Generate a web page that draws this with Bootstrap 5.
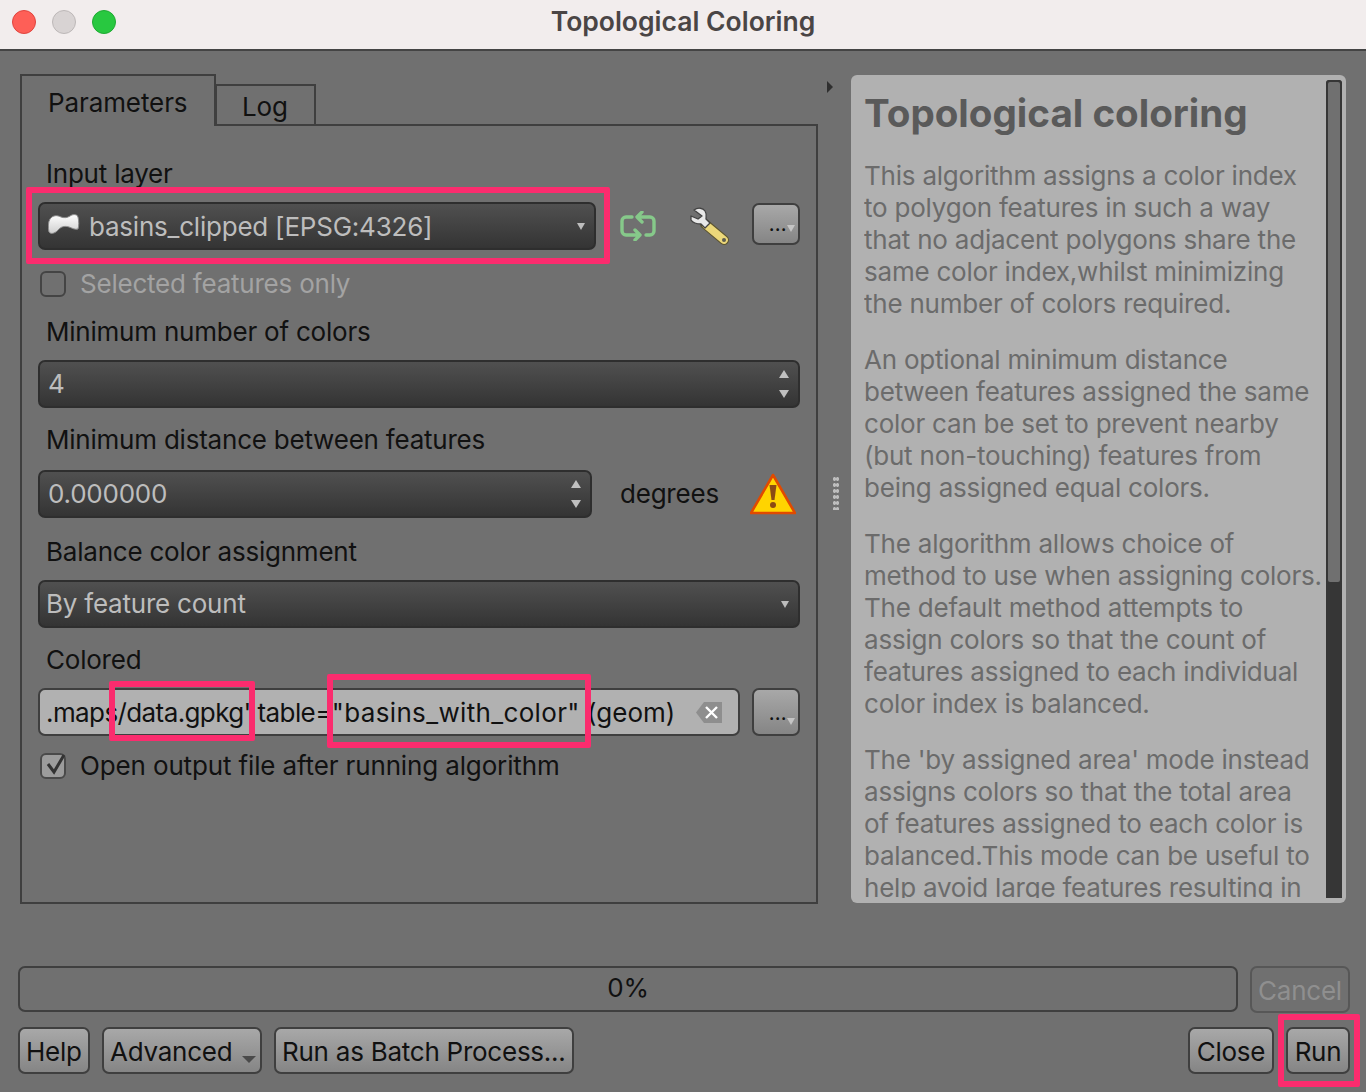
<!DOCTYPE html>
<html lang="en">
<head>
<meta charset="utf-8">
<title>Topological Coloring</title>
<link href="https://cdn.jsdelivr.net/npm/bootstrap@5.3.0/dist/css/bootstrap.min.css" rel="stylesheet">
<style>
html,body{margin:0;height:1092px;overflow:hidden;background:#707070}
body{font-family:Inter,"Noto Sans",sans-serif;font-size:26px;color:#111;line-height:32px;letter-spacing:-.22px}
.app-win{position:relative;width:1366px;height:1092px;background:#707070}
.title-bar{height:51px;background:#f2eded;border-bottom:2px solid #444;position:relative;justify-content:center;align-items:center;padding-bottom:8px}
.title-text{font-weight:600;color:#4a4545;font-size:26.5px;letter-spacing:0}
.lights{position:absolute;left:12px;top:10px;gap:16px}
.light{width:24px;height:24px;border-radius:50%}
.l-red{background:#fe5f57;border:1px solid #e0443e}
.l-grey{background:#d8d3d3;border:1px solid #bdb8b8}
.l-green{background:#28c840;border:1px solid #1eaa32}
.main-row{padding:23px 0 0 20px;height:890px}
.left-col{width:798px;flex:none}
.tabbar{height:52px;align-items:flex-end;border:0;margin-bottom:-2px;position:relative;z-index:1}
.tab-on,.tab-off{border:2px solid #3f3f3f;color:#111;font-size:26px;letter-spacing:-.1px}
.tab-on{width:196px;height:52px;border-bottom:0;background:#707070;padding:11px 0 0 26px}
.tab-off{width:101px;height:42px;margin-left:-1px;padding:5px 0 0 25px}
.pane{height:780px;border:2px solid #3f3f3f;padding:31px 16px 0 16px}
.lbl{height:32px;padding:1px 0 0 8px}
.ctl{height:48px;border:2px solid #2e2e2e;border-radius:7px;background:linear-gradient(#505050,#343434);color:#bdbdbd;align-items:center;position:relative;padding-left:8px}
.m13{margin-top:13px}.m15{margin-top:15px}.m17{margin-top:17px}.m18{margin-top:18px}.m21{margin-top:21px}
.w-combo{width:558px}.w-full{width:762px}.w-spin{width:554px}
.caret-d{position:absolute;right:9px;top:50%;margin-top:-3px;width:0;height:0;border:4px solid transparent;border-top:7px solid #bdbdbd;border-bottom:0}
.spin-u,.spin-d{position:absolute;right:9px;width:0;height:0;border-left:5px solid transparent;border-right:5px solid transparent}
.spin-u{top:8px;border-bottom:8px solid #c0c0c0}
.spin-d{bottom:8px;border-top:8px solid #c0c0c0}
.chk-row{height:26px;align-items:center;padding-left:2px;gap:14px}
.chk-box{width:26px;height:26px;border:2px solid #444;border-radius:6px;flex:none}
.chk-box.on{background:#9c9c9c;border-color:#4a4a4a}
.chk-box svg{overflow:visible}
.txt-dis{color:#a3a3a3}
.txt-open{letter-spacing:-.14px}
.combo-txt{margin-top:2px;margin-left:1px}
.feat-txt{margin-left:-2px}
.mini-btn{width:48px;height:48px;border:2px solid #3f3f3f;border-radius:7px;background:linear-gradient(#a8a8a8,#858585);position:relative;flex:none}
.mini-btn b{position:absolute;left:15px;top:16px;font-size:16px;line-height:16px;font-weight:700;color:#111;letter-spacing:.6px}
.mini-btn i{position:absolute;right:3px;top:28px;width:0;height:0;border-left:4px solid transparent;border-right:4px solid transparent;border-top:7px solid #c4c4c4}
.mini-top{height:42px;align-self:flex-start;margin-top:1px;margin-left:22px}
.mini-top b{top:12px}
.mini-top i{top:20px}
.edit-box{width:702px;height:48px;background:#b1b1b1;border:2px solid #3f3f3f;border-radius:7px;position:relative;overflow:hidden;white-space:nowrap;padding:7px 0 0 6px;line-height:32px;margin-right:12px;letter-spacing:0}
.seg-a{letter-spacing:-.6px}
.seg-b{letter-spacing:.35px}
.clear-ic{position:absolute;right:16px;top:12px}
.help-panel{width:495px;height:828px;margin-left:33px;margin-top:1px;background:#b1b1b1;border-radius:6px;position:relative;padding:0 0 0 13px;overflow:hidden;color:#6b6b6b}
.help-clip{height:823px;overflow:hidden;width:470px;white-space:nowrap}
.help-h{font-size:38.6px;font-weight:700;color:#5a5a5a;margin:0;line-height:44px;padding-top:16px;height:85px;letter-spacing:0}
.help-p{margin:0 0 24px 0;line-height:32px}
.sb-track{position:absolute;right:4px;top:5px;width:16px;height:818px;background:#363636;border-radius:3px 3px 0 0}
.sb-thumb{height:504px;background:#707070;border:2px solid #363636;border-radius:4px}
.split-arrow{position:absolute;left:827px;top:81px;width:0;height:0;border-top:6px solid transparent;border-bottom:6px solid transparent;border-left:6px solid #2f2f2f}
.split-dots{position:absolute;left:833px;top:476px;width:6px;height:34px;background-image:radial-gradient(circle,#bdbdbd 1.6px,transparent 2px);background-size:3px 6px}
.bar-row{padding:0 16px 0 18px;height:47px;margin-top:25px;justify-content:space-between}
.prog-box{width:1220px;height:46px;border:2px solid #3f3f3f;border-radius:7px;text-align:center;line-height:40px}
.qbtn{height:47px;padding:2px 6px 0;border:2px solid #3f3f3f;border-radius:7px;background:linear-gradient(#a8a8a8,#858585);font-size:26px;color:#111;line-height:41px;--bs-btn-hover-bg:#999;white-space:nowrap;letter-spacing:-.25px}
.qbtn.dis{background:#707070;color:#a0a0a0;width:100px;border-color:#4a4a4a;padding:2px 0 0}
.btn-row{padding:0 16px 0 18px;margin-top:14px;height:47px;justify-content:space-between}
.btn-grp{gap:12px}
.w-help{width:72px;text-align:left}.w-adv{width:160px;text-align:left;position:relative}.w-batch{width:300px;text-align:left}.w-close{width:86px}.w-run{width:64px}
.adv-caret{position:absolute;right:4px;bottom:9px;width:0;height:0;border-left:7px solid transparent;border-right:7px solid transparent;border-top:7px solid #4a4a4a}
.pink{position:absolute;border:6px solid #fb2c6e;border-radius:2px;pointer-events:none;z-index:5}
.p-input{left:26px;top:187px;width:584px;height:77px}
.p-gpkg{left:109px;top:681px;width:146px;height:60px}
.p-basins{left:327px;top:674px;width:264px;height:74px}
.p-run{left:1278px;top:1014px;width:82px;height:73px}
.deg-lbl{margin-left:28px;width:130px;flex:none}
.ic-wrench{margin-left:32px}
</style>
</head>
<body>
<div class="app-win">
  <div class="title-bar d-flex">
    <div class="lights d-flex"><span class="light l-red"></span><span class="light l-grey"></span><span class="light l-green"></span></div>
    <div class="title-text">Topological Coloring</div>
  </div>

  <div class="main-row d-flex">
    <div class="left-col">
      <div class="tabbar d-flex">
        <div class="tab-on">Parameters</div>
        <div class="tab-off">Log</div>
      </div>
      <div class="pane">
        <div class="lbl">Input layer</div>
        <div class="d-flex align-items-center m13">
          <div class="ctl d-flex w-combo">
            <svg width="32" height="24" viewBox="0 0 32 24" class="me-2 flex-shrink-0"><defs><linearGradient id="lg" x1="0" y1="0" x2="0" y2="1"><stop offset="0" stop-color="#fff"/><stop offset="1" stop-color="#cfcfcf"/></linearGradient></defs><path d="M2 5C5 1 9 1 13 3c3 1 6 1 9-1 3-2 7-2 8 1 1 4 1 9 0 12-3 1-6-1-9-2-3-1-7-1-10 2-3 4-8 6-10 3C0 14 0 8 2 5z" fill="url(#lg)" stroke="#8a8a8a" stroke-width="1"/></svg>
            <span class="combo-txt">basins_clipped [EPSG:4326]</span>
            <span class="caret-d"></span>
          </div>
          <svg class="ms-4 flex-shrink-0" width="36" height="30" viewBox="0 0 36 30"><path d="M12 6H6a4 4 0 0 0-4 4v10a4 4 0 0 0 4 4h14M15 19l5 5-5 5M26 24h4a4 4 0 0 0 4-4V10a4 4 0 0 0-4-4H17M22 1l-5 5 5 5" fill="none" stroke="#86c98a" stroke-width="3.4" stroke-linecap="round" stroke-linejoin="round"/></svg>
          <svg class="ic-wrench flex-shrink-0" width="42" height="38" viewBox="0 0 42 38"><path d="M17 17L36 33" stroke="#5d5530" stroke-width="10" stroke-linecap="round"/><path d="M18 18L36 33" stroke="#ecd87a" stroke-width="7.6" stroke-linecap="round"/><circle cx="36" cy="33" r="2" fill="#5d5d50"/><path d="M6 3c4-3 9-2 11 1 2 3 1 6 1 8l4 4-5 5-4-4c-4 0-8-1-10-4L3 9l7 3 4-3z" fill="#e8e8e8" stroke="#444" stroke-width="1.3" stroke-linejoin="round"/></svg>
          <div class="mini-btn mini-top"><b>...</b><i></i></div>
        </div>
        <div class="chk-row d-flex m21"><span class="chk-box"></span><span class="txt-dis">Selected features only</span></div>
        <div class="lbl m18">Minimum number of colors</div>
        <div class="ctl d-flex w-full m13"><span>4</span><span class="spin-u"></span><span class="spin-d"></span></div>
        <div class="lbl m15">Minimum distance between features</div>
        <div class="d-flex align-items-center m15">
          <div class="ctl d-flex w-spin"><span>0.000000</span><span class="spin-u"></span><span class="spin-d"></span></div>
          <span class="deg-lbl">degrees</span>
          <svg class="flex-shrink-0" width="46" height="42" viewBox="0 0 46 42"><path d="M23 2L45 40H1z" fill="#ffd400" stroke="#e04a00" stroke-width="2.6" stroke-linejoin="round"/><path d="M19.5 12h7l-2 15h-3z" fill="#8b4a14"/><circle cx="23" cy="32" r="3" fill="#8b4a14"/></svg>
        </div>
        <div class="lbl m17">Balance color assignment</div>
        <div class="ctl d-flex w-full m13"><span class="feat-txt">By feature count</span><span class="caret-d"></span></div>
        <div class="lbl m15">Colored</div>
        <div class="d-flex m13">
          <div class="edit-box"><span class="seg-a">.maps/data.gpkg' table=</span><span class="seg-b">"basins_with_color"</span> (geom)
            <svg class="clear-ic" width="26" height="21" viewBox="0 0 26 21"><path d="M0 10.500L8 0h18v21H8z" fill="#8e8e8e"/><path d="M10 5l11 11M21 5L10 16" stroke="#fff" stroke-width="2.4"/></svg>
          </div>
          <div class="mini-btn"><b>...</b><i></i></div>
        </div>
        <div class="chk-row d-flex m17">
          <span class="chk-box on d-flex align-items-center justify-content-center"><svg width="22" height="22" viewBox="0 0 22 22"><path d="M6 9l6 8L22 0" fill="none" stroke="#333" stroke-width="3"/></svg></span>
          <span class="txt-open">Open output file after running algorithm</span>
        </div>
      </div>
    </div>
    <div class="help-panel">
      <div class="help-clip">
        <h1 class="help-h">Topological coloring</h1>
        <p class="help-p">This algorithm assigns a color index<br>to polygon features in such a way<br>that no adjacent polygons share the<br>same color index,whilst minimizing<br>the number of colors required.</p>
        <p class="help-p">An optional minimum distance<br>between features assigned the same<br>color can be set to prevent nearby<br>(but non-touching) features from<br>being assigned equal colors.</p>
        <p class="help-p">The algorithm allows choice of<br>method to use when assigning colors.<br>The default method attempts to<br>assign colors so that the count of<br>features assigned to each individual<br>color index is balanced.</p>
        <p class="help-p">The 'by assigned area' mode instead<br>assigns colors so that the total area<br>of features assigned to each color is<br>balanced.This mode can be useful to<br>help avoid large features resulting in</p>
      </div>
      <div class="sb-track"><div class="sb-thumb"></div></div>
    </div>
  </div>

  <span class="split-arrow"></span>
  <span class="split-dots"></span>

  <div class="bar-row d-flex">
    <div class="prog-box">0%</div>
    <button class="btn qbtn dis" disabled>Cancel</button>
  </div>
  <div class="btn-row d-flex">
    <div class="d-flex btn-grp">
      <button class="btn qbtn w-help">Help</button>
      <button class="btn qbtn w-adv">Advanced<span class="adv-caret"></span></button>
      <button class="btn qbtn w-batch">Run as Batch Process...</button>
    </div>
    <div class="d-flex btn-grp">
      <button class="btn qbtn w-close">Close</button>
      <button class="btn qbtn w-run">Run</button>
    </div>
  </div>

  <div class="pink p-input"></div>
  <div class="pink p-gpkg"></div>
  <div class="pink p-basins"></div>
  <div class="pink p-run"></div>
</div>
</body>
</html>
